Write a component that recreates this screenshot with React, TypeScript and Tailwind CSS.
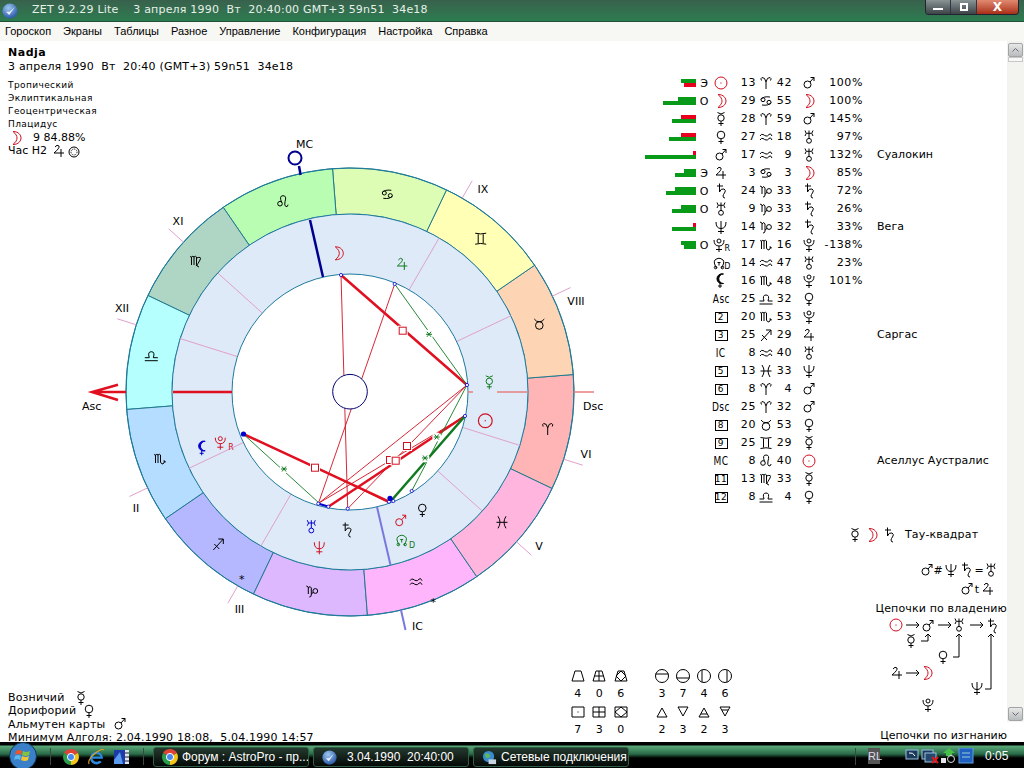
import type { ReactNode } from "react";

type GlyphDef = { d?: string; c?: number[][]; filled?: boolean };

// astro symbols in a -8..8 box
const GLYPHS: Record<string, GlyphDef> = {
  sun: { c: [[0, 0, 6]], d: "M-.6,0H.6" },
  moon: { d: "M-3,-6.5C3,-6.5 5,-2.5 5,0C5,2.5 3,6.5 -3,6.5C0,4 1,2 1,0C1,-2 0,-4 -3,-6.5Z" },
  mercury: { c: [[0, -1, 3.2]], d: "M-3.5,-6.5Q0,-3.5 3.5,-6.5M0,2.2V7M-2.5,4.5H2.5" },
  venus: { c: [[0, -2, 3.8]], d: "M0,1.8V7M-2.5,4.5H2.5" },
  mars: { c: [[-1.5, 1.5, 3.5]], d: "M1,-1L5,-5.5M1.5,-5.5H5V-2" },
  jupiter: { d: "M-4,-4Q-2,-7 0,-5Q1,-3 -5,2H5M2,-2V6" },
  saturn: { d: "M-4,-5H2M-1.5,-7.5V1Q0,-3 3,-2Q5,-1 4,1Q2,4 2,5Q2,7 4,7" },
  uranus: { c: [[0, 3.8, 2.4]], d: "M-4,-6.5Q-1.5,-3.5 -4,-1M4,-6.5Q1.5,-3.5 4,-1M-2.5,-3.7H2.5M0,-6.5V1.4" },
  neptune: { d: "M-5,-5Q-5,1.5 0,1.5Q5,1.5 5,-5M0,-6V7M-3,4.5H3" },
  pluto: { c: [[0, -4, 2]], d: "M-5,-5Q-5,1 0,1Q5,1 5,-5M0,1V7M-3,4.5H3" },
  node: { c: [[-3.4, 4.5, 1.3], [3.4, 4.5, 1.3]], d: "M-2.5,5.2Q-6,-1 -4,-3Q0,-6.5 4,-3Q6,-1 2.5,5.2M-1.5,-.5H1.5M0,-.5V2.5" },
  lilith: { d: "M2.5,-7A5,5 0 1 0 2.5,2.5A4,4 0 1 1 2.5,-7ZM-1,2V7M-3,5H1", filled: true },
  aries: { d: "M0,6V-1Q-1,-6 -4,-5.5Q-6,-4.5 -4.5,-2.5M0,-1Q1,-6 4,-5.5Q6,-4.5 4.5,-2.5" },
  taurus: { c: [[0, 1.5, 3.8]], d: "M-5,-5Q-3,-2 0,-2.3Q3,-2 5,-5" },
  gemini: { d: "M-5.5,-5.5Q0,-4 5.5,-5.5M-5.5,5.5Q0,4 5.5,5.5M-2.5,-4.5V4.5M2.5,-4.5V4.5" },
  cancer: { c: [[-3, -1.3, 2], [3, 1.3, 2]], d: "M-5,-1.5Q-3,-5 4,-4M5,1.5Q3,5 -4,4" },
  leo: { c: [[-3, 2, 2.3]], d: "M-1.5,.5Q-4,-6 0,-6Q4,-6 2,0Q1,4 3,5Q5,5 5,3" },
  virgo: { d: "M-6,-4Q-5,-5 -4.5,-4V4M-4.5,-4Q-3,-5.5 -2,-4V4M-2,-4Q-.5,-5.5 .5,-4V3Q1,6 3,6M.5,-3Q6,-5 4,-1Q2,3 0,5" },
  libra: { d: "M-6.5,5H6.5M-6.5,2H-2Q-4,-4 0,-4Q4,-4 2,2H6.5" },
  scorpio: { d: "M-6,-4Q-5,-5 -4.5,-4V4M-4.5,-4Q-3,-5.5 -2,-4V4M-2,-4Q-.5,-5.5 .5,-4V3Q1,5 3,5L5,2M3.4,2H5V3.6" },
  sag: { d: "M-5,6L5,-5M0,-5H5V0M-4,0L1,5" },
  capricorn: { c: [[3, 0, 2.4]], d: "M-6,-5L-4,-4V3M-4,-3Q-2,-6 -1,-3V4Q-1,6 -3,6M-1,3Q1,2 1,1" },
  aquarius: { d: "M-6,-1Q-4.5,-3.5 -3,-2.5T0,-1T3,-2.5T6,-1M-6,3Q-4.5,.5 -3,1.5T0,3T3,1.5T6,3" },
  pisces: { d: "M-4,-6Q0,0 -4,6M4,-6Q0,0 4,6M-5.5,0H5.5" },
};

const RED = "#d01020";
const GREEN = "#107a20";
const BLUE = "#0000d0";

function GlyphG({ name, x, y, color = "#000", scale = 1 }: { name: string; x: number; y: number; color?: string; scale?: number }) {
  const g = GLYPHS[name];
  return (
    <g transform={`translate(${x} ${y}) scale(${scale})`} fill={g.filled ? color : "none"} stroke={color} strokeWidth={1}>
      {g.d && <path d={g.d} />}
      {g.c && g.c.map((c, i) => <circle key={i} cx={c[0]} cy={c[1]} r={c[2]} />)}
    </g>
  );
}

function Glyph({ name, color = "#000" }: { name: string; color?: string }) {
  return (
    <svg width={16} height={16} viewBox="-8 -8 16 16" className="inline-block shrink-0">
      <GlyphG name={name} x={0} y={0} color={color} />
    </svg>
  );
}

const CX = 350;
const CY = 392;
const ASC = 205.53;

const pt = (lon: number, r: number) => {
  const t = ((180 + lon - ASC) * Math.PI) / 180;
  return [CX + r * Math.cos(t), CY - r * Math.sin(t)];
};

const SIGNS = [
  { name: "aries", color: "#ffb5b5", at: [547.7, 429] },
  { name: "taurus", color: "#fdd5b5", at: [539.3, 324] },
  { name: "gemini", color: "#ffffb5", at: [480.7, 238.7] },
  { name: "cancer", color: "#ddfdb5", at: [387.3, 194.3] },
  { name: "leo", color: "#b8fdb2", at: [283, 201.7] },
  { name: "virgo", color: "#afd5c5", at: [196, 261] },
  { name: "libra", color: "#b5ffff", at: [151.3, 355.7] },
  { name: "scorpio", color: "#b5ddff", at: [160, 459] },
  { name: "sag", color: "#b5b8ff", at: [218.3, 544] },
  { name: "capricorn", color: "#ddb8ff", at: [312.3, 591] },
  { name: "aquarius", color: "#ffb5fb", at: [416, 581.7] },
  { name: "pisces", color: "#ffb5dd", at: [502, 522.3] },
];

const sector = (i: number) => {
  const a = pt(i * 30, 224);
  const b = pt((i + 1) * 30, 224);
  const c = pt((i + 1) * 30, 178);
  const d = pt(i * 30, 178);
  return `M${a[0]},${a[1]}A224,224 0 0 0 ${b[0]},${b[1]}L${c[0]},${c[1]}A178,178 0 0 1 ${d[0]},${d[1]}Z`;
};

const CUSPS = [
  { lon: 230.88, label: "II", at: [136, 508] },
  { lon: 265.48, label: "III", at: [239.5, 609] },
  { lon: 343.55, label: "V", at: [539, 546] },
  { lon: 8.07, label: "VI", at: [586, 454] },
  { lon: 50.88, label: "VIII", at: [576, 301] },
  { lon: 85.48, label: "IX", at: [483, 189] },
  { lon: 163.55, label: "XI", at: [178, 221] },
  { lon: 188.07, label: "XII", at: [122, 308] },
];

type Seg = [number, number, number, number];

const THIN_RED: Seg[] = [
  [341, 275, 347.7, 508.7],
  [394.7, 284, 318.3, 503.7],
  [322, 470, 389, 503],
  [319, 503, 467, 385],
  [347.7, 508.7, 467, 385],
  [319, 503, 465, 416],
];
const THICK_RED: Seg[] = [
  [341, 275, 467, 385],
  [243.3, 434, 389, 501.7],
  [328.3, 506.7, 465, 416],
];
const THIN_GREEN: Seg[] = [
  [394.7, 284, 467, 385],
  [411.7, 491, 467, 385],
  [243.3, 434, 319, 503],
];
const SQUARES = [
  [402.7, 330.7],
  [315, 467.7],
  [407, 446],
  [390, 460],
  [395.7, 460.7],
];
const STARS = [
  [425, 458],
  [284, 469],
  [429, 334.3],
  [436.7, 437],
];
const DOTS = [
  [341, 275],
  [394.7, 284],
  [467, 385],
  [465, 416],
  [411.7, 491],
  [393.3, 501],
  [389, 501.7],
  [347.7, 508.7],
  [328.3, 506.7],
  [318.3, 503.7],
  [243.3, 434],
];

function Chart() {
  const inner = "#deeaf7";
  const pink = "#e0a0cc";
  return (
    <svg width={640} height={520} viewBox="0 130 640 520" className="block shrink-0">
      <circle cx={CX} cy={CY} r={178} fill={inner} />
      {SIGNS.map((s, i) => (
        <path key={s.name} d={sector(i)} fill={s.color} stroke="#1f7a8e" strokeWidth={1} />
      ))}
      <circle cx={CX} cy={CY} r={178} fill={inner} stroke="#1f7a9e" />
      <circle cx={CX} cy={CY} r={224} fill="none" stroke="#1f7a9e" />
      {SIGNS.map((s) => (
        <GlyphG key={s.name} name={s.name} x={s.at[0]} y={s.at[1]} />
      ))}

      {CUSPS.map((c) => {
        const a = pt(c.lon, 118);
        const b = pt(c.lon, 178);
        const d = pt(c.lon, 224);
        const e = pt(c.lon, 244);
        return (
          <g key={c.label} stroke={pink} strokeWidth={1}>
            <line x1={a[0]} y1={a[1]} x2={b[0]} y2={b[1]} />
            <line x1={d[0]} y1={d[1]} x2={e[0]} y2={e[1]} />
            <text x={c.at[0]} y={c.at[1] + 4} textAnchor="middle" stroke="none" fill="#000" fontSize={11} fontFamily="'DejaVu Sans', sans-serif">
              {c.label}
            </text>
          </g>
        );
      })}

      <circle cx={CX} cy={CY} r={118} fill="#fff" stroke="#1f7a9e" />

      {/* angles */}
      <line x1={173} y1={392} x2={232} y2={392} stroke="#e01020" strokeWidth={2.5} />
      <path d="M126,392H92M118,384.7L92,392L118,400" fill="none" stroke="#e01020" strokeWidth={2.5} />
      <path d="M468,392H473M497,392H527M574,392H594" stroke="#e88080" strokeWidth={1.5} />
      <line x1={310} y1={220} x2={323} y2={277} stroke="#000090" strokeWidth={2.5} />
      <line x1={299} y1={166} x2={300.6} y2={175} stroke="#000090" strokeWidth={2.5} />
      <circle cx={295} cy={158} r={6.5} fill="#fff" stroke="#000090" strokeWidth={2} />
      <line x1={377} y1={507} x2={390.5} y2={565} stroke="#7878e0" strokeWidth={2} />
      <line x1={401} y1={610} x2={405.5} y2={630} stroke="#7878e0" strokeWidth={2} />

      {/* aspects */}
      {THIN_RED.map((s, i) => (
        <line key={i} x1={s[0]} y1={s[1]} x2={s[2]} y2={s[3]} stroke={RED} strokeWidth={0.9} />
      ))}
      {THICK_RED.map((s, i) => (
        <line key={i} x1={s[0]} y1={s[1]} x2={s[2]} y2={s[3]} stroke="#e01020" strokeWidth={2.5} />
      ))}
      {THIN_GREEN.map((s, i) => (
        <line key={i} x1={s[0]} y1={s[1]} x2={s[2]} y2={s[3]} stroke={GREEN} strokeWidth={0.9} />
      ))}
      <line x1={391} y1={501} x2={465} y2={416} stroke={GREEN} strokeWidth={2.5} />
      {SQUARES.map((s, i) => (
        <g key={i}>
          <rect x={s[0] - 5} y={s[1] - 5} width={10} height={10} fill="#fff" />
          <rect x={s[0] - 3.5} y={s[1] - 3.5} width={7} height={7} fill="#fff" stroke={RED} />
        </g>
      ))}
      {STARS.map((s, i) => (
        <g key={i} stroke={GREEN}>
          <circle cx={s[0]} cy={s[1]} r={4.5} fill="#fff" stroke="none" />
          <path d={`M${s[0] - 3},${s[1]}H${s[0] + 3}M${s[0] - 2},${s[1] - 2.5}L${s[0] + 2},${s[1] + 2.5}M${s[0] + 2},${s[1] - 2.5}L${s[0] - 2},${s[1] + 2.5}`} fill="none" />
        </g>
      ))}
      <line x1={318} y1={503.5} x2={328} y2={506.5} stroke={BLUE} strokeWidth={2} />
      {DOTS.map((s, i) => (
        <circle key={i} cx={s[0]} cy={s[1]} r={1.6} fill="#fff" stroke={BLUE} strokeWidth={0.8} />
      ))}
      <circle cx={243.5} cy={434} r={2.6} fill={BLUE} />
      <circle cx={390} cy={498.3} r={2.6} fill={BLUE} />
      <circle cx={CX} cy={391.7} r={17.3} fill="#fff" stroke="#000070" />

      {/* planets */}
      <GlyphG name="moon" x={338.3} y={253.3} color={RED} />
      <GlyphG name="jupiter" x={402.3} y={264} color={GREEN} />
      <GlyphG name="mercury" x={489.3} y={382.3} color={GREEN} />
      <GlyphG name="sun" x={485.3} y={420.7} color={RED} scale={1.15} />
      <GlyphG name="venus" x={422.3} y={510} />
      <GlyphG name="mars" x={400.7} y={520.7} color={RED} />
      <GlyphG name="node" x={401.7} y={540} color={GREEN} />
      <GlyphG name="saturn" x={346.7} y={530} />
      <GlyphG name="uranus" x={311.3} y={526.7} color={BLUE} />
      <GlyphG name="neptune" x={319.3} y={547.3} color={RED} />
      <GlyphG name="lilith" x={202.7} y={448.3} color={BLUE} />
      <GlyphG name="pluto" x={220.3} y={442.7} color={RED} />

      <g fontFamily="'DejaVu Sans', sans-serif" fontSize={11} fill="#000">
        <text x={231} y={450} textAnchor="middle" fontSize={8} fill={RED}>R</text>
        <text x={412} y={548} textAnchor="middle" fontSize={8} fill={GREEN}>D</text>
        <text x={241.7} y={583} textAnchor="middle">*</text>
        <text x={433.3} y={606} textAnchor="middle">*</text>
        <text x={296} y={148}>MC</text>
        <text x={412} y={630}>IC</text>
        <text x={82} y={410}>Asc</text>
        <text x={583} y={410}>Dsc</text>
      </g>
    </svg>
  );
}

type Row = {
  bars?: [string, number, string, number];
  mark?: string;
  head: ReactNode;
  deg: string;
  sign: string;
  min: string;
  ruler: string;
  pct?: string;
  star?: string;
};

const G = "#0a9a1a";
const R = "#e8001c";

const Boxed = ({ n }: { n: string }) => (
  <span className="flex h-[11px] w-[13px] items-center justify-center border border-black text-[9px] leading-none">{n}</span>
);
const Cond = ({ t }: { t: string }) => <span className="inline-block origin-center scale-x-[0.75] text-[12px] leading-none">{t}</span>;

const ROWS: Row[] = [
  { bars: [G, 15, R, 12], mark: "Э", head: <Glyph name="sun" color={RED} />, deg: "13", sign: "aries", min: "42", ruler: "mars", pct: "100%" },
  { bars: [G, 18, G, 33], mark: "О", head: <Glyph name="moon" color={RED} />, deg: "29", sign: "cancer", min: "55", ruler: "moon", pct: "100%" },
  { bars: [R, 15, G, 24], head: <Glyph name="mercury" />, deg: "28", sign: "aries", min: "59", ruler: "mars", pct: "145%" },
  { bars: [R, 15, G, 27], head: <Glyph name="venus" />, deg: "27", sign: "aquarius", min: "18", ruler: "uranus", pct: "97%" },
  { bars: [R, 3, G, 51], head: <Glyph name="mars" />, deg: "17", sign: "aquarius", min: "9", ruler: "uranus", pct: "132%", star: "Суалокин" },
  { bars: [G, 12, G, 21], mark: "Э", head: <Glyph name="jupiter" />, deg: "3", sign: "cancer", min: "3", ruler: "moon", pct: "85%" },
  { bars: [G, 21, G, 30], mark: "О", head: <Glyph name="saturn" />, deg: "24", sign: "capricorn", min: "33", ruler: "saturn", pct: "72%" },
  { bars: [G, 15, G, 24], mark: "О", head: <Glyph name="uranus" />, deg: "9", sign: "capricorn", min: "33", ruler: "saturn", pct: "26%" },
  { bars: [R, 3, G, 24], head: <Glyph name="neptune" />, deg: "14", sign: "capricorn", min: "32", ruler: "saturn", pct: "33%", star: "Вега" },
  { bars: [G, 15, G, 12], mark: "О", head: <span className="flex items-end"><Glyph name="pluto" /><span className="-ml-[3px] text-[8px] leading-none">R</span></span>, deg: "17", sign: "scorpio", min: "16", ruler: "pluto", pct: "-138%" },
  { head: <span className="flex items-end"><Glyph name="node" /><span className="-ml-[3px] text-[8px] leading-none">D</span></span>, deg: "14", sign: "aquarius", min: "47", ruler: "uranus", pct: "23%" },
  { head: <Glyph name="lilith" />, deg: "16", sign: "scorpio", min: "48", ruler: "pluto", pct: "101%" },
  { head: <Cond t="Asc" />, deg: "25", sign: "libra", min: "32", ruler: "venus" },
  { head: <Boxed n="2" />, deg: "20", sign: "scorpio", min: "53", ruler: "pluto" },
  { head: <Boxed n="3" />, deg: "25", sign: "sag", min: "29", ruler: "jupiter", star: "Саргас" },
  { head: <Cond t="IC" />, deg: "8", sign: "aquarius", min: "40", ruler: "uranus" },
  { head: <Boxed n="5" />, deg: "13", sign: "pisces", min: "33", ruler: "neptune" },
  { head: <Boxed n="6" />, deg: "8", sign: "aries", min: "4", ruler: "mars" },
  { head: <Cond t="Dsc" />, deg: "25", sign: "aries", min: "32", ruler: "mars" },
  { head: <Boxed n="8" />, deg: "20", sign: "taurus", min: "53", ruler: "venus" },
  { head: <Boxed n="9" />, deg: "25", sign: "gemini", min: "29", ruler: "mercury" },
  { head: <Cond t="MC" />, deg: "8", sign: "leo", min: "40", ruler: "sun", star: "Аселлус Аустралис" },
  { head: <Boxed n="11" />, deg: "13", sign: "virgo", min: "33", ruler: "mercury" },
  { head: <Boxed n="12" />, deg: "8", sign: "libra", min: "4", ruler: "venus" },
];

function Table() {
  return (
    <div className="ml-[4px] flex flex-col pt-[33px]">
      {ROWS.map((r, i) => (
        <div key={i} className="grid h-[18px] grid-cols-[52px_17px_16px_27px_20px_16px_9px_16px_46px_14px_auto] items-center text-[11px] tracking-[0.6px]">
          <div className="flex flex-col items-end">
            {r.bars && (
              <>
                <div className="h-[4px]" style={{ width: r.bars[1], background: r.bars[0] }} />
                <div className="h-[4px]" style={{ width: r.bars[3], background: r.bars[2] }} />
              </>
            )}
          </div>
          <div className="text-center leading-none">{r.mark}</div>
          <div className="flex justify-center">{r.head}</div>
          <div className="text-right">{r.deg}</div>
          <div className="flex justify-center"><Glyph name={r.sign} /></div>
          <div className="text-right">{r.min}</div>
          <div />
          <div className="flex justify-center"><Glyph name={r.ruler} color={r.ruler === "moon" || r.ruler === "sun" ? RED : "#000"} /></div>
          <div className="text-right">{r.pct}</div>
          <div />
          <div className="whitespace-nowrap tracking-[0.05px]">{r.star}</div>
        </div>
      ))}
    </div>
  );
}

function Quality() {
  const a = "fill-none stroke-black";
  const top = [
    { d: "M-3,-5H3L6,5H-6Z" },
    { d: "M-3,-5H3L6,5H-6ZM0,-5V5M-4.5,0H4.5" },
    { d: "M-3,-5H3L6,5H-6ZM0,-5L5,0L0,5L-5,0Z" },
  ];
  const bottom = [
    { d: "M-6,-5H6V5H-6ZM-.5,0H.5" },
    { d: "M-6,-5H6V5H-6ZM0,-5V5M-6,0H6" },
    { d: "M-6,-5H6V5H-6ZM0,-5L6,0L0,5L-6,0Z" },
  ];
  const top2 = ["M-6.5,-2H6.5", "M-6.5,2H6.5", "M-2,-6V6", "M2,-6V6"];
  const bottom2 = ["M-5,5H5L0,-4Z", "M-5,-5H5L0,4Z", "M-5,5H5L0,-4ZM-3,2H3", "M-5,-5H5L0,4ZM-3,-2H3"];
  const Cell = ({ d, circle, n, w }: { d: string; circle?: boolean; n: string; w: string }) => (
    <div className={`flex flex-col items-center ${w}`}>
      <svg width={16} height={16} viewBox="-8 -8 16 16" className={a}>
        {circle && <circle r={6.5} />}
        <path d={d} />
      </svg>
      <span className="mt-[3px] leading-[14px]">{n}</span>
    </div>
  );
  return (
    <div className="flex gap-[20px] pb-[5px] text-[11px]">
      <div className="flex flex-col gap-[3px]">
        <div className="flex">
          {top.map((t, i) => <Cell key={i} d={t.d} n={["4", "0", "6"][i]} w="w-[21.5px]" />)}
        </div>
        <div className="flex">
          {bottom.map((t, i) => <Cell key={i} d={t.d} n={["7", "3", "0"][i]} w="w-[21.5px]" />)}
        </div>
      </div>
      <div className="flex flex-col gap-[3px]">
        <div className="flex">
          {top2.map((t, i) => <Cell key={i} d={t} circle n={["3", "7", "4", "6"][i]} w="w-[21px]" />)}
        </div>
        <div className="flex">
          {bottom2.map((t, i) => <Cell key={i} d={t} n={["2", "3", "2", "3"][i]} w="w-[21px]" />)}
        </div>
      </div>
    </div>
  );
}

function Chains() {
  const arrow = (x1: number, x2: number, y: number) => (
    <path d={`M${x1},${y}H${x2}M${x2 - 3},${y - 3}L${x2},${y}L${x2 - 3},${y + 3}`} fill="none" stroke="#000" />
  );
  return (
    <div className="-mb-[1px] flex w-[187px] shrink-0 flex-col items-end text-[11px]">
      <div className="flex h-[16px] w-full items-center tracking-[0.15px]">
        <span className="ml-[27px] flex gap-[1px]">
          <Glyph name="mercury" />
          <Glyph name="moon" color={RED} />
          <Glyph name="saturn" />
        </span>
        <span className="ml-[8px]">Тау-квадрат</span>
      </div>
      <svg width={187} height={40} viewBox="820 558 187 40" className="mt-[17px] block shrink-0">
        <GlyphG name="mars" x={927} y={568} />
        <GlyphG name="neptune" x={951} y={568} />
        <GlyphG name="saturn" x={966} y={568} />
        <GlyphG name="uranus" x={991} y={568} />
        <GlyphG name="mars" x={967} y={587} />
        <GlyphG name="jupiter" x={988} y={587} />
        <g fontFamily="'DejaVu Sans', sans-serif" fontSize={11} textAnchor="middle">
          <text x={938} y={572}>#</text>
          <text x={979} y={572}>=</text>
          <text x={977} y={591}>t</text>
        </g>
      </svg>
      <div className="mt-[2px] h-[14px] whitespace-nowrap leading-[14px] tracking-[0.15px]">Цепочки по владению</div>
      <svg width={187} height={100} viewBox="820 612 187 100" className="block shrink-0">
        <GlyphG name="sun" x={896} y={621} color={RED} />
        {arrow(906, 919, 621)}
        <GlyphG name="mars" x={928} y={622} />
        {arrow(938, 951, 621)}
        <GlyphG name="uranus" x={959} y={621} />
        {arrow(970, 983, 621)}
        <GlyphG name="saturn" x={992} y={622} />
        <GlyphG name="mercury" x={911} y={637} />
        <path d="M921,637H928V630M925,633L928,630L931,633" fill="none" stroke="#000" />
        <GlyphG name="venus" x={943} y={653} />
        <path d="M953,653H959V630M956,633L959,630L962,633" fill="none" stroke="#000" />
        <GlyphG name="jupiter" x={897} y={669} />
        {arrow(906, 919, 669)}
        <GlyphG name="moon" x={927} y={669} color={RED} />
        <GlyphG name="neptune" x={977} y={684} />
        <path d="M985,685H991V630M988,633L991,630L994,633" fill="none" stroke="#000" />
        <GlyphG name="pluto" x={928} y={701} />
      </svg>
      <div className="mt-[13px] h-[14px] whitespace-nowrap leading-[14px]">Цепочки по изгнанию</div>
    </div>
  );
}

function Scrollbar() {
  const btn = "flex h-[14px] w-[15px] items-center justify-center rounded-[2px] border border-[#a0a4a4] bg-gradient-to-b from-[#e8e8e8] to-[#b8bcbc]";
  return (
    <div className="flex h-[681px] w-[17px] shrink-0 flex-col items-center bg-[#f3f3f0] pt-[2px] pb-[1px]">
      <div className={btn}>
        <svg width={7} height={4} viewBox="0 0 7 4"><path d="M.5,3.5L3.5,.5L6.5,3.5" fill="none" stroke="#667" /></svg>
      </div>
      <div className="h-[5px] w-[15px] border border-[#c8c8c8] bg-[#f8f8f8]" />
      <div className="flex-1" />
      <div className={btn}>
        <svg width={7} height={4} viewBox="0 0 7 4"><path d="M.5,.5L3.5,3.5L6.5,.5" fill="none" stroke="#667" /></svg>
      </div>
    </div>
  );
}

function ZetIcon({ size }: { size: number }) {
  return (
    <svg width={size} height={size} viewBox="0 0 20 20" className="shrink-0">
      <defs>
        <radialGradient id={`zet${size}`} cx="0.4" cy="0.3" r="0.8">
          <stop offset="0" stopColor="#9cc8f0" />
          <stop offset="1" stopColor="#1c4a9c" />
        </radialGradient>
      </defs>
      <circle cx={10} cy={10} r={9.5} fill={`url(#zet${size})`} />
      <path d="M5,11L9,15L16,5L9.5,11Z" fill="#eef" />
    </svg>
  );
}

function ChromeIcon() {
  return (
    <svg width={16} height={16} viewBox="0 0 16 16" className="shrink-0">
      <path d="M8,8L1.1,4A8,8 0 0 1 14.9,4Z" fill="#dc4437" />
      <path d="M8,8L14.9,4A8,8 0 0 1 8,16Z" fill="#f5c518" />
      <path d="M8,8L8,16A8,8 0 0 1 1.1,4Z" fill="#2a9d4a" />
      <circle cx={8} cy={8} r={3.6} fill="#4a8af0" stroke="#fff" />
    </svg>
  );
}

function Taskbar() {
  const task = "flex h-[20px] w-[156px] items-center gap-[4px] overflow-hidden rounded-[3px] border border-[#2f5f45] bg-gradient-to-b from-[#243a2e] to-[#060a08] pl-[8px] whitespace-nowrap";
  return (
    <div className="flex h-[26px] items-end bg-[linear-gradient(#000_0,#000_3px,#5aa878_4px,#2a6a48_12px,#000_16px,#000_100%)] font-['Liberation_Sans',sans-serif] text-[12px] text-white">
      <div className="flex h-[26px] w-[50px] shrink-0 items-center justify-start pl-[8px]">
        <svg width={30} height={26} viewBox="0 0 30 26">
          <circle cx={15} cy={14} r={13.5} fill="#3a80c8" stroke="#12344e" />
          <path d="M8,9Q11,7 14,9L13,13Q10,11 7,13Z" fill="#e8582c" />
          <path d="M15,9Q18,11 22,9L21,13Q18,15 14,13Z" fill="#84c43c" />
          <path d="M7,14Q10,12 13,14L12,18Q9,16 6,18Z" fill="#5cb8f0" />
          <path d="M14,14Q18,16 21,14L20,18Q17,20 13,18Z" fill="#f4c430" />
        </svg>
      </div>
      <div className="mb-[3px] h-[17px] w-px shrink-0 bg-[#3a4a40]" />
      <div className="mb-[3px] ml-[12px] flex w-[80px] shrink-0 items-center gap-[9px]">
        <ChromeIcon />
        <svg width={17} height={17} viewBox="0 0 16 16" className="shrink-0">
          <path d="M3,9H13A5,5 0 1 0 12,12.5M3,9A5,5 0 0 0 11,13" fill="none" stroke="#2a8ae0" strokeWidth={2} />
          <path d="M1,15Q-1,11 8,4Q14,0 15,2" fill="none" stroke="#e8a020" strokeWidth={1} />
        </svg>
        <svg width={15} height={14} viewBox="0 0 15 14" className="shrink-0">
          <rect width={15} height={14} fill="#1c3ca8" />
          <path d="M0,10L6,2L9,14H0Z" fill="#5a9af0" />
          <rect x={11} y={0} width={4} height={14} fill="#e0e4f0" />
          <path d="M11,3H15M11,7H15M11,11H15" stroke="#223" />
        </svg>
      </div>
      <div className="mb-[3px] h-[17px] w-px shrink-0 bg-[#3a4a40]" />
      <div className="mb-[1px] ml-[9px] flex gap-[4px]">
        <div className={task}>
          <ChromeIcon />
          <span>Форум : AstroPro - пр...</span>
        </div>
        <div className={`${task} from-[#2c5a42] to-[#0c2418]`}>
          <ZetIcon size={15} />
          <span className="ml-[6px]">3.04.1990&nbsp; 20:40:00</span>
        </div>
        <div className={task}>
          <svg width={15} height={15} viewBox="0 0 16 16" className="shrink-0">
            <circle cx={7} cy={7} r={6} fill="#3a8ad0" />
            <path d="M3,4Q7,2 9,6Q7,10 4,8Z" fill="#5cb85c" />
            <rect x={7} y={10} width={8} height={5} fill="#c8d4e0" />
          </svg>
          <span>Сетевые подключения</span>
        </div>
      </div>
      <div className="mb-[3px] ml-[226px] h-[17px] w-px shrink-0 bg-[#3a4a40]" />
      <div className="mb-[4px] ml-[12px] flex h-[16px] w-[12px] shrink-0 items-center bg-[#555] text-[11px] leading-none text-[#dde]">RL</div>
      <div className="mb-[4px] ml-[25px] flex h-[16px] items-center gap-[1px]">
        <svg width={70} height={16} viewBox="0 0 70 16">
          <rect x={1} y={2} width={12} height={9} fill="#1c3a5c" stroke="#9cc0e0" />
          <path d="M4,5Q8,4 10,8" fill="none" stroke="#fff" />
          <rect x={17} y={2} width={11} height={9} fill="#1c3a5c" stroke="#9cc0e0" />
          <rect x={20} y={5} width={11} height={9} fill="#24486c" stroke="#9cc0e0" />
          <path d="M27,9L33,15M33,9L27,15" stroke="#e01818" strokeWidth={2} />
          <path d="M38,5L44,0L50,5H47V8H41V5Z" fill="#48c048" />
          <rect x={36} y={10} width={5} height={5} fill="#e8e8e8" />
          <circle cx={46} cy={11} r={3.5} fill="none" stroke="#ddd" />
          <rect x={54} y={0} width={14} height={15} fill="#2060c0" stroke="#60a0e0" />
          <path d="M57,5H65M57,9H65" stroke="#9cd" />
        </svg>
      </div>
      <div className="mb-[5px] ml-[10px] text-[12px] leading-[14px]">0:05</div>
    </div>
  );
}

export default function App() {
  return (
    <div className="flex h-[768px] w-[1024px] flex-col overflow-hidden bg-white font-['DejaVu_Sans',sans-serif] text-black">
      {/* title bar */}
      <div className="flex h-[22px] shrink-0 items-center border-b border-[#1f5238] bg-gradient-to-b from-[#38614c] to-[#2b7c50] pl-[2px]">
        <ZetIcon size={16} />
        <span className="ml-[14px] whitespace-pre text-[11px] tracking-[0.2px] text-[#e8f0ea]">
          {"ZET 9.2.29 Lite    3 апреля 1990  Вт  20:40:00 GMT+3 59n51  34e18"}
        </span>
        <div className="ml-auto mr-[5px] flex h-[15px] self-start overflow-hidden rounded-b-[4px] border border-t-0 border-[#223]">
          <div className="flex w-[25px] items-center justify-center border-r border-[#334] bg-gradient-to-b from-[#8a9494] to-[#3c4448]">
            <div className="mt-[3px] h-[2px] w-[10px] bg-white" />
          </div>
          <div className="flex w-[26px] items-center justify-center border-r border-[#334] bg-gradient-to-b from-[#8a9494] to-[#3c4448]">
            <div className="h-[8px] w-[8px] border-2 border-white" />
          </div>
          <div className="flex w-[41px] items-center justify-center bg-gradient-to-b from-[#e08a70] to-[#a82c14] text-[12px] font-bold leading-none text-white">X</div>
        </div>
      </div>
      {/* menu */}
      <div className="flex h-[19px] shrink-0 items-center gap-[12px] bg-[#f7f7f3] pl-[5px] font-['Liberation_Sans',sans-serif] text-[11px]">
        {["Гороскоп", "Экраны", "Таблицы", "Разное", "Управление", "Конфигурация", "Настройка", "Справка"].map((m) => (
          <span key={m}>{m}</span>
        ))}
      </div>
      {/* body */}
      <div className="flex h-[701px] shrink-0">
        <div className="flex w-[1007px] shrink-0 flex-col">
          <div className="flex h-[469px] shrink-0">
            <div className="flex w-[640px] shrink-0 flex-col">
              <div className="flex h-[116px] shrink-0 flex-col pl-[8px] pt-[5px]">
                <div className="text-[11px] font-bold leading-[14px] tracking-[0.5px]">Nadja</div>
                <div className="whitespace-pre text-[11px] leading-[13px] tracking-[0.2px]">{"3 апреля 1990  Вт  20:40 (GMT+3) 59n51  34e18"}</div>
                <div className="mt-[6px] flex flex-col text-[9px] leading-[13px] tracking-[0.4px]">
                  <span>Тропический</span>
                  <span>Эклиптикальная</span>
                  <span>Геоцентрическая</span>
                  <span>Плацидус</span>
                </div>
                <div className="flex h-[14px] items-center whitespace-pre text-[11px]">
                  <Glyph name="moon" color={RED} />
                  <span className="ml-[9px]">9 84.88%</span>
                </div>
                <div className="flex h-[13px] items-center whitespace-pre text-[11px]">
                  <span>Час H2</span>
                  <span className="ml-[4px]"><Glyph name="jupiter" /></span>
                  <svg width={12} height={12} viewBox="-6 -6 12 12" className="ml-[1px]">
                    <circle r={5} fill="none" stroke="#000" />
                    <circle r={3} fill="none" stroke="#000" strokeDasharray="1 1" />
                  </svg>
                </div>
              </div>
              <div className="-mt-[27px]">
                <Chart />
              </div>
            </div>
            <Table />
          </div>
          <div className="flex flex-1 items-end justify-between">
            <div className="-mb-[2px] flex w-[567px] flex-col pl-[8px] text-[11px] leading-[13px] tracking-[0.15px]">
              <div className="flex h-[13px] items-center"><span>Возничий</span><span className="ml-[9px]"><Glyph name="mercury" /></span></div>
              <div className="flex h-[13px] items-center"><span>Дорифорий</span><span className="ml-[5px]"><Glyph name="venus" /></span></div>
              <div className="flex h-[14px] items-center"><span>Альмутен карты</span><span className="ml-[7px]"><Glyph name="mars" /></span></div>
              <div className="whitespace-pre">{"Минимум Алголя: 2.04.1990 18:08,  5.04.1990 14:57"}</div>
            </div>
            <Quality />
            <div className="flex-1" />
            <Chains />
          </div>
        </div>
        <Scrollbar />
      </div>
      <Taskbar />
    </div>
  );
}
